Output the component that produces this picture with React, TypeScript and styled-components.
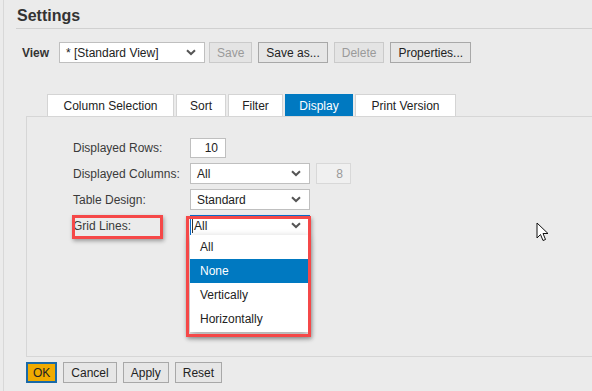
import styled, { createGlobalStyle } from "styled-components";

const GlobalStyle = createGlobalStyle`
  html, body {
    margin: 0;
    padding: 0;
    background: #ebebeb;
    overflow: hidden;
  }
  body {
    font-family: "Liberation Sans", Arial, sans-serif;
    font-size: 12px;
    color: #333;
  }
`;

const Page = styled.div`
  position: relative;
  margin-left: 3px;
  min-height: 391px;
  border-left: 1px solid #d8d8d8;
  box-sizing: border-box;
`;

const Header = styled.h1`
  margin: 0 0 0 12px;
  height: 29px;
  padding: 6px 0 0 1px;
  box-sizing: border-box;
  border-bottom: 1px solid #d0d0d0;
  font-size: 16px;
  line-height: 20px;
  font-weight: bold;
  color: #333;
`;

const ViewRow = styled.div`
  display: flex;
  align-items: center;
  margin: 13px 0 0 18px;
  height: 21px;
`;

const ViewLabel = styled.span`
  font-weight: bold;
  width: 37px;
  color: #333;
`;

const SelectBox = styled.div<{ $width: number; $focused?: boolean }>`
  position: relative;
  display: flex;
  align-items: center;
  width: ${(p) => p.$width}px;
  height: 21px;
  box-sizing: border-box;
  padding: 0 8px 0 6px;
  background: #fff;
  border: 1px solid ${(p) => (p.$focused ? "#0a6ed1" : "#bfbfbf")};
  color: #222;
  margin-right: ${(p) => (p.$width > 130 ? 4 : 0)}px;

  span {
    flex: 1;
  }
`;

const Caret = styled.i`
  display: inline-block;
  width: 1px;
  height: 14px;
  background: #333;
  margin: 0 1px 0 -5px;
`;

const Chevron = () => (
  <svg width="10" height="7" viewBox="0 0 10 7">
    <polyline points="1,1.2 5,5 9,1.2" fill="none" stroke="#555" strokeWidth="2" />
  </svg>
);

const Button = styled.button<{ $primary?: boolean }>`
  height: 21px;
  padding: 0 ${(p) => (p.$primary ? 5 : 7)}px;
  margin-right: 6px;
  box-sizing: border-box;
  font-family: inherit;
  font-size: 12px;
  color: ${(p) => (p.disabled ? "#9a9a9a" : "#222")};
  background: ${(p) => (p.$primary ? "#f0ab00" : p.disabled ? "#e4e4e4" : "#e6e6e6")};
  border: ${(p) =>
    p.$primary ? "2px solid #1a6aa8" : p.disabled ? "1px solid #cacaca" : "1px solid #a8a8a8"};
  border-radius: 0;
`;

const TabStrip = styled.div`
  display: flex;
  gap: 2px;
  margin: 31px 0 0 43px;
  height: 22px;
`;

const Tab = styled.div<{ $width: number; $active?: boolean }>`
  width: ${(p) => p.$width}px;
  box-sizing: border-box;
  display: flex;
  align-items: center;
  justify-content: center;
  background: ${(p) => (p.$active ? "#0079c1" : "#fff")};
  color: ${(p) => (p.$active ? "#fff" : "#222")};
  border: 1px solid ${(p) => (p.$active ? "#0079c1" : "#d4d4d4")};
  border-bottom: none;
`;

const Panel = styled.div`
  margin: 0 -10px 0 22px;
  height: 241px;
  box-sizing: border-box;
  border: 1px solid #d6d6d6;
  padding: 20px 0 0 46px;
  display: flex;
  flex-direction: column;
  gap: 5px;
`;

const FormRow = styled.div`
  display: flex;
  align-items: center;
  height: 21px;
`;

const Label = styled.div`
  position: relative;
  width: 117px;
  color: #3a3a3a;
`;

const Field = styled.div<{ $disabled?: boolean }>`
  width: ${(p) => (p.$disabled ? 35 : 36)}px;
  height: ${(p) => (p.$disabled ? 21 : 20)}px;
  box-sizing: border-box;
  padding-right: 7px;
  display: flex;
  align-items: center;
  justify-content: flex-end;
  background: ${(p) => (p.$disabled ? "#f0f0f0" : "#fff")};
  border: 1px solid ${(p) => (p.$disabled ? "#d8d8d8" : "#bfbfbf")};
  color: ${(p) => (p.$disabled ? "#999" : "#222")};
  margin-left: ${(p) => (p.$disabled ? 6 : 0)}px;
`;

const Dropdown = styled.ul`
  position: absolute;
  left: -1px;
  top: 19px;
  width: 118px;
  margin: 0;
  padding: 0 0 1px;
  list-style: none;
  background: #fff;
  box-shadow: 0 3px 8px rgba(0, 0, 0, 0.3);
  z-index: 2;
`;

const Option = styled.li<{ $selected?: boolean }>`
  height: 24px;
  line-height: 24px;
  padding-left: 10px;
  background: ${(p) => (p.$selected ? "#0079c1" : "transparent")};
  color: ${(p) => (p.$selected ? "#fff" : "#222")};
`;

const Highlight = styled.div<{ $l: number; $t: number; $w: number; $h: number }>`
  position: absolute;
  left: ${(p) => p.$l}px;
  top: ${(p) => p.$t}px;
  width: ${(p) => p.$w}px;
  height: ${(p) => p.$h}px;
  box-sizing: border-box;
  border: 3px solid #f54848;
  box-shadow: 1px 2px 4px rgba(0, 0, 0, 0.35);
  z-index: 3;
  pointer-events: none;
`;

const Pointer = styled.svg`
  position: absolute;
  left: 532px;
  top: 222px;
`;

const Footer = styled.div`
  display: flex;
  margin: 5px 0 0 22px;
`;

export default function App() {
  return (
    <>
      <GlobalStyle />
      <Page>
        <Header>Settings</Header>

        <ViewRow>
          <ViewLabel>View</ViewLabel>
          <SelectBox $width={146}>
            <span>* [Standard View]</span>
            <Chevron />
          </SelectBox>
          <Button disabled>Save</Button>
          <Button>Save as...</Button>
          <Button disabled>Delete</Button>
          <Button>Properties...</Button>
        </ViewRow>

        <TabStrip>
          <Tab $width={127}>Column Selection</Tab>
          <Tab $width={50}>Sort</Tab>
          <Tab $width={55}>Filter</Tab>
          <Tab $width={68} $active>Display</Tab>
          <Tab $width={101}>Print Version</Tab>
        </TabStrip>

        <Panel>
          <FormRow>
            <Label>Displayed Rows:</Label>
            <Field>10</Field>
          </FormRow>
          <FormRow>
            <Label>Displayed Columns:</Label>
            <SelectBox $width={120}>
              <span>All</span>
              <Chevron />
            </SelectBox>
            <Field $disabled>8</Field>
          </FormRow>
          <FormRow>
            <Label>Table Design:</Label>
            <SelectBox $width={120}>
              <span>Standard</span>
              <Chevron />
            </SelectBox>
          </FormRow>
          <FormRow>
            <Label>
              Grid Lines:
              <Highlight $l={-1} $t={-4} $w={91} $h={24} />
            </Label>
            <SelectBox $width={120} $focused>
              <Caret />
              <span>All</span>
              <Chevron />
              <Dropdown>
                <Option>All</Option>
                <Option $selected>None</Option>
                <Option>Vertically</Option>
                <Option>Horizontally</Option>
              </Dropdown>
              <Highlight $l={-5} $t={0} $w={125} $h={121} />
            </SelectBox>
          </FormRow>
        </Panel>

        <Footer>
          <Button $primary>OK</Button>
          <Button>Cancel</Button>
          <Button>Apply</Button>
          <Button>Reset</Button>
        </Footer>

        <Pointer width="13" height="21" viewBox="0 0 13 21">
          <path
            d="M1 1 L1 16 L4.5 12.5 L7 18.5 L9.5 17.5 L7 11.5 L12 11.5 Z"
            fill="#fff"
            stroke="#111"
            strokeWidth="1"
            strokeLinejoin="round"
          />
        </Pointer>
      </Page>
    </>
  );
}
